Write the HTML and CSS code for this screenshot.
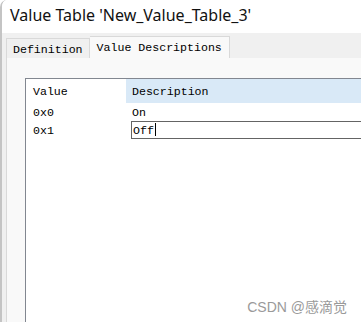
FILE: index.html
```html
<!DOCTYPE html>
<html>
<head>
  <link rel="stylesheet" href="styles.css">
</head>
<body>
  <div class="window">
    <div class="title-bar">Value Table 'New_Value_Table_3'</div>

    <div class="dialog-body">
      <!-- Tabs -->
      <div class="tab-row">
        <div class="tab">Definition</div>
        <div class="tab active">Value Descriptions</div>
      </div>

      <div class="tab-panel">
        <div class="grid">
          <div class="grid-row grid-head">
            <div class="cell col-value">Value</div>
            <div class="cell col-desc selected">Description</div>
          </div>
          <div class="grid-row">
            <div class="cell col-value">0x0</div>
            <div class="cell col-desc">On</div>
          </div>
          <div class="grid-row">
            <div class="cell col-value">0x1</div>
            <div class="cell col-desc">
              <div class="cell-editor">Off<span class="caret"></span></div>
            </div>
          </div>
        </div>
      </div>
    </div>

    <div class="watermark">CSDN @感滴觉</div>
  </div>
</body>
</html>
```

FILE: styles.css
```css
html, body {
  margin: 0;
  padding: 0;
  background: #fff;
}

.window {
  position: relative;
  width: 361px;
  height: 322px;
  overflow: hidden;
  display: flex;
  flex-direction: column;
  border-left: 2px solid #c4c4c4;
  border-top-left-radius: 7px;
  box-sizing: border-box;
  font-family: "Liberation Mono", "DejaVu Sans Mono", monospace;
  font-size: 11.6px;
  color: #000;
}

.title-bar {
  height: 33px;
  padding-left: 8px;
  line-height: 30px;
  background: #fff;
  font-family: "Noto Sans", "Open Sans", sans-serif;
  font-size: 16px;
  color: #111;
  white-space: nowrap;
}

.dialog-body {
  flex: 1;
  display: flex;
  flex-direction: column;
  background: #f0f0f0;
}

/* Tab strip */
.tab-row {
  display: flex;
  align-items: flex-end;
  padding: 4px 0 0 4px;
  height: 21px;
}

.tab {
  height: 19px;
  line-height: 22px;
  padding: 0 6px 0 6px;
  border: 1px solid #d9d9d9;
  border-bottom: none;
  background: #f0f0f0;
}

.tab.active {
  height: 21px;
  line-height: 21px;
  padding: 0 7px 0 7px;
  border-left: none;
  background: #f9f9f9;
}

.tab-panel {
  flex: 1;
  display: flex;
  background: #f9f9f9;
  border-left: 1px solid #d9d9d9;
  margin-left: 4px;
  padding: 20px 0 0 18px;
}

/* Value grid */
.grid {
  flex: 1;
  background: #fff;
  border-left: 1px solid #828790;
  border-top: 1px solid #828790;
}

.grid-row {
  display: flex;
  height: 18px;
  line-height: 20px;
}

.grid-head {
  height: 24px;
  line-height: 26px;
}

.cell {
  white-space: nowrap;
}

.col-value {
  width: 100px;
  padding-left: 7px;
  box-sizing: border-box;
}

.col-desc {
  flex: 1;
  padding-left: 6px;
}

.selected {
  background: #d9e9f7;
}

.cell-editor {
  height: 16px;
  line-height: 17px;
  margin-left: -1px;
  padding-left: 1px;
  border: 1px solid #646464;
  border-right: none;
}

.caret {
  display: inline-block;
  width: 1px;
  height: 13px;
  margin-left: 1px;
  vertical-align: -2px;
  background: #000;
}

.watermark {
  position: absolute;
  right: 14px;
  bottom: 6px;
  font-family: "Liberation Sans", "Noto Sans CJK SC", sans-serif;
  font-size: 14px;
  color: #9a9a9a;
}
```
